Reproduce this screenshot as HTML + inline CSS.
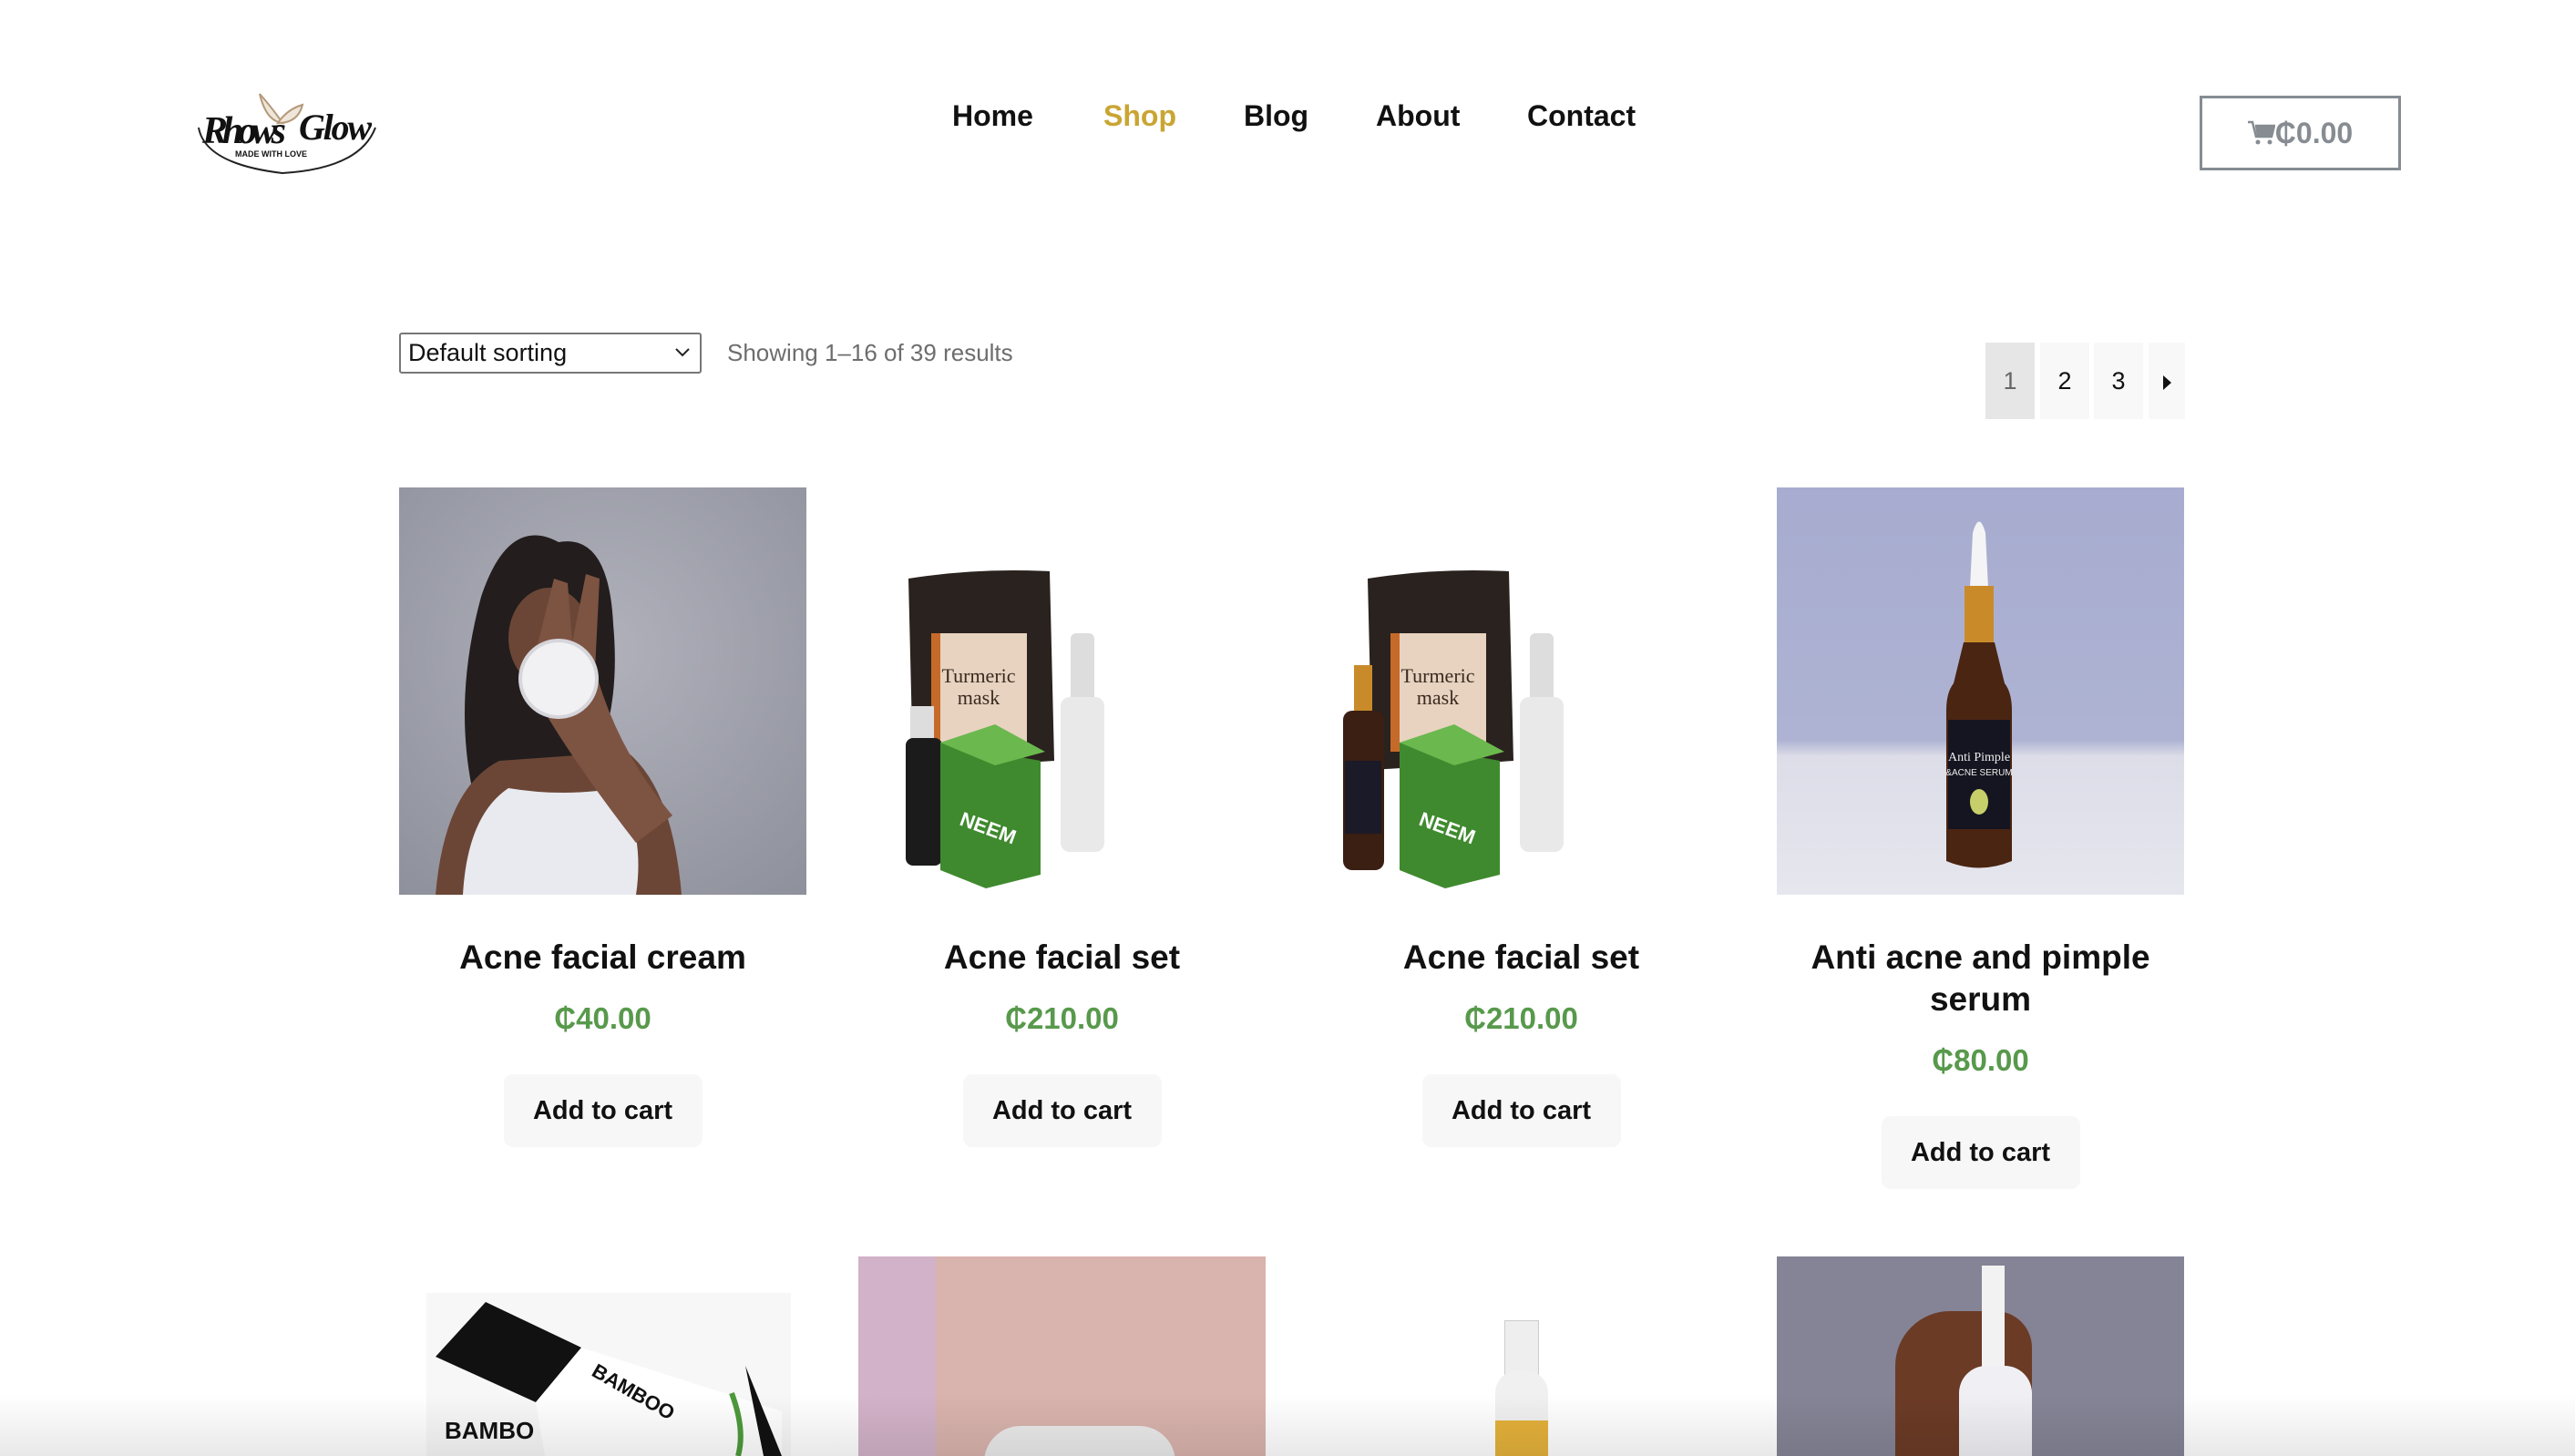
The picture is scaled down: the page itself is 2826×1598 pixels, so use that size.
<!DOCTYPE html>
<html><head><meta charset="utf-8"><style>
*{margin:0;padding:0;box-sizing:border-box}
body{width:2826px;height:1598px;background:#fff;position:relative;overflow:hidden;font-family:"Liberation Sans",sans-serif}
.a{position:absolute}
.nav{top:109px;font-size:32px;font-weight:bold;color:#111}
.card{position:absolute;width:447px;text-align:center}
.img{width:447px;height:447px;position:relative;overflow:hidden}
.t{font-size:37px;font-weight:bold;color:#111;margin-top:46px;line-height:46px}
.p{font-size:33px;color:#58994c;margin-top:24px;line-height:40px;font-weight:bold;-webkit-text-stroke:0}
.b{display:inline-block;margin-top:41px;width:218px;height:80px;line-height:80px;background:#f7f7f7;border-radius:10px;font-size:29px;font-weight:bold;color:#111}
.pg{position:absolute;top:376px;height:84px;line-height:84px;text-align:center;font-size:27px;background:#f8f8f8;color:#111}
</style></head><body>

<div class="a" style="left:210px;top:95px;width:205px;height:105px">
<svg width="205" height="105" viewBox="0 0 205 105">
<path d="M75 8 Q90 25 100 40 Q82 38 75 8Z" fill="#efe6da" stroke="#b49a7a" stroke-width="2"/>
<path d="M95 40 Q105 25 122 20 Q117 40 95 40Z" fill="#efe6da" stroke="#b49a7a" stroke-width="2"/>
<text x="12" y="62" font-family="Liberation Serif,serif" font-style="italic" font-size="42" font-weight="bold" fill="#111" textLength="92">Rhows</text>
<text x="118" y="58" font-family="Liberation Serif,serif" font-style="italic" font-size="40" font-weight="bold" fill="#111" textLength="80">Glow</text>
<text x="48" y="77" font-size="9" font-weight="bold" fill="#111">MADE WITH LOVE</text>
<path d="M8 45 Q15 85 100 95 Q185 90 202 45" fill="none" stroke="#222" stroke-width="2"/>
</svg></div>

<div class="a nav" style="left:1045px">Home</div>
<div class="a nav" style="left:1211px;color:#c9a533">Shop</div>
<div class="a nav" style="left:1365px">Blog</div>
<div class="a nav" style="left:1510px">About</div>
<div class="a nav" style="left:1676px">Contact</div>

<div class="a" style="left:2414px;top:105px;width:221px;height:82px;border:3px solid #868c92;color:#868c92;font-size:32px;font-weight:bold;text-align:center;line-height:76px">
<svg width="30" height="28" viewBox="0 0 30 28" style="vertical-align:-3px"><path d="M0 2h5l4 16h17l3-12H8" fill="none" stroke="#868c92" stroke-width="2.5"/><path d="M8 7h21l-3 11H10z" fill="#868c92"/><circle cx="11" cy="24" r="2.5" fill="#868c92"/><circle cx="24" cy="24" r="2.5" fill="#868c92"/></svg>₵0.00</div>

<div class="a" style="left:438px;top:365px;width:332px;height:45px;border:2px solid #777;border-radius:3px;font-size:27px;line-height:41px;padding-left:8px;color:#111">Default sorting
<svg class="a" style="right:10px;top:14px" width="18" height="12" viewBox="0 0 18 12"><path d="M2 2l7 7 7-7" fill="none" stroke="#222" stroke-width="2"/></svg></div>
<div class="a" style="left:798px;top:372px;font-size:26px;color:#6d6d6d">Showing 1–16 of 39 results</div>

<div class="pg" style="left:2179px;width:54px;background:#e6e6e6;color:#666">1</div>
<div class="pg" style="left:2239px;width:54px">2</div>
<div class="pg" style="left:2298px;width:54px">3</div>
<div class="pg" style="left:2358px;width:40px"><svg width="12" height="18" viewBox="0 0 12 18" style="vertical-align:-2px"><path d="M2 1l9 8-9 8z" fill="#111"/></svg></div>

<div class="card" style="left:438px;top:535px">
<div class="img" style="background:radial-gradient(circle at 50% 40%,#b0b1bb,#8e909b)">
<svg width="447" height="447" viewBox="0 0 447 447">
<path d="M90 120 Q120 30 175 60 Q230 50 235 150 Q245 260 200 330 L80 330 Q60 230 90 120Z" fill="#231d1d"/>
<ellipse cx="165" cy="165" rx="45" ry="55" fill="#6b4636"/>
<path d="M40 447 Q50 330 110 300 L250 290 Q300 330 310 447Z" fill="#6b4636"/>
<path d="M70 447 Q75 360 120 330 Q180 340 240 330 Q270 380 260 447Z" fill="#e8eaf0"/>
<path d="M150 180 L170 100 L185 105 L190 170 L205 95 L220 100 L215 200 Q240 290 300 360 L260 390 Q190 300 150 230Z" fill="#7d5342"/>
<circle cx="175" cy="210" r="42" fill="#f1f1f4" stroke="#d5d5da" stroke-width="4"/>
</svg></div>
<div class="t">Acne facial cream</div><div class="p">₵40.00</div><div class="b">Add to cart</div></div>

<div class="card" style="left:942px;top:535px">
<div class="img" style="background:#fff">
<svg width="447" height="447" viewBox="0 0 447 447">
<path d="M55 100 Q130 88 210 92 L215 300 L60 310Z" fill="#2a221e"/>
<rect x="80" y="160" width="105" height="130" fill="#e7d3bf"/><rect x="80" y="160" width="10" height="130" fill="#c66a2a"/>
<text x="132" y="214" text-anchor="middle" font-family="Liberation Serif,serif" font-size="22" fill="#3a2a20">Turmeric</text>
<text x="132" y="238" text-anchor="middle" font-family="Liberation Serif,serif" font-size="22" fill="#3a2a20">mask</text>
<rect x="233" y="160" width="26" height="80" rx="6" fill="#ddd"/><rect x="222" y="230" width="48" height="170" rx="10" fill="#e9e9ea"/>
<rect x="57" y="240" width="26" height="40" fill="#ddd"/><rect x="52" y="275" width="40" height="140" rx="8" fill="#1b1b1b"/>
<path d="M90 280 L200 300 L200 425 L140 440 L90 420Z" fill="#3f8a2e"/><path d="M90 280 L150 260 L205 290 L150 305Z" fill="#6bb84e"/>
<text x="110" y="370" font-size="22" font-weight="bold" fill="#fff" transform="rotate(20 110 370)">NEEM</text>
</svg></div>
<div class="t">Acne facial set</div><div class="p">₵210.00</div><div class="b">Add to cart</div></div>

<div class="card" style="left:1446px;top:535px">
<div class="img" style="background:#fff">
<svg width="447" height="447" viewBox="0 0 447 447">
<path d="M55 100 Q130 88 210 92 L215 300 L60 310Z" fill="#2a221e"/>
<rect x="80" y="160" width="105" height="130" fill="#e7d3bf"/><rect x="80" y="160" width="10" height="130" fill="#c66a2a"/>
<text x="132" y="214" text-anchor="middle" font-family="Liberation Serif,serif" font-size="22" fill="#3a2a20">Turmeric</text>
<text x="132" y="238" text-anchor="middle" font-family="Liberation Serif,serif" font-size="22" fill="#3a2a20">mask</text>
<rect x="233" y="160" width="26" height="80" rx="6" fill="#ddd"/><rect x="222" y="230" width="48" height="170" rx="10" fill="#e9e9ea"/>
<rect x="40" y="195" width="20" height="50" fill="#c98b2a"/><rect x="28" y="245" width="45" height="175" rx="10" fill="#3a1f12"/><rect x="30" y="300" width="40" height="80" fill="#1b1a28"/>
<path d="M90 280 L200 300 L200 425 L140 440 L90 420Z" fill="#3f8a2e"/><path d="M90 280 L150 260 L205 290 L150 305Z" fill="#6bb84e"/>
<text x="110" y="370" font-size="22" font-weight="bold" fill="#fff" transform="rotate(20 110 370)">NEEM</text>
</svg></div>
<div class="t">Acne facial set</div><div class="p">₵210.00</div><div class="b">Add to cart</div></div>

<div class="card" style="left:1950px;top:535px">
<div class="img" style="background:linear-gradient(#a7acd0 0%,#aeb3d3 62%,#dcdde8 66%,#e6e6ee 100%)">
<svg width="447" height="447" viewBox="0 0 447 447">
<path d="M215 50 Q222 25 229 50 L232 110 L212 110Z" fill="#f4f4f6"/>
<rect x="206" y="108" width="32" height="62" fill="#c98b2a"/>
<path d="M205 170 L239 170 L250 215 Q258 225 258 245 L258 410 Q222 425 186 410 L186 245 Q186 225 194 215Z" fill="#4a2512"/>
<rect x="188" y="255" width="68" height="120" fill="#141520"/>
<text x="222" y="300" text-anchor="middle" font-family="Liberation Serif,serif" font-size="14" fill="#eee">Anti Pimple</text>
<text x="222" y="316" text-anchor="middle" font-size="10" fill="#eee">&amp;ACNE SERUM</text>
<ellipse cx="222" cy="345" rx="10" ry="14" fill="#c7cf6a"/>
</svg></div>
<div class="t">Anti acne and pimple<br>serum</div><div class="p">₵80.00</div><div class="b">Add to cart</div></div>

<div class="a" style="left:438px;top:1379px;width:447px;height:219px;overflow:hidden">
<svg width="447" height="219" viewBox="0 0 447 219">
<rect x="30" y="40" width="400" height="179" fill="#f7f7f7"/>
<path d="M40 110 L95 50 L200 100 L150 160Z" fill="#111"/>
<path d="M150 160 L200 100 L420 170 L420 219 L160 219Z" fill="#fff"/>
<text x="210" y="130" font-size="22" font-weight="bold" fill="#111" transform="rotate(30 210 130)">BAMBOO</text>
<path d="M380 120 L420 219 L400 219Z" fill="#111"/><path d="M365 150 Q380 190 372 219" stroke="#4c9a3a" stroke-width="6" fill="none"/>
<text x="50" y="200" font-size="26" font-weight="bold" fill="#111">BAMBO</text>
</svg></div>
<div class="a" style="left:942px;top:1379px;width:447px;height:219px;background:#d9b3ad;overflow:hidden">
<div class="a" style="left:0;top:0;width:85px;height:219px;background:#d2b2c8"></div>
<div class="a" style="left:138px;top:186px;width:210px;height:60px;background:#eaeaea;border-radius:40px 40px 0 0"></div></div>
<div class="a" style="left:1446px;top:1379px;width:447px;height:219px;background:#fff;overflow:hidden">
<div class="a" style="left:205px;top:70px;width:38px;height:60px;background:#eee;border:1px solid #ccc"></div>
<div class="a" style="left:195px;top:125px;width:58px;height:100px;background:#f0f0f0;border-radius:25px 25px 0 0"></div>
<div class="a" style="left:195px;top:180px;width:58px;height:50px;background:#e4b13a"></div></div>
<div class="a" style="left:1950px;top:1379px;width:447px;height:219px;background:#858496;overflow:hidden">
<div class="a" style="left:130px;top:60px;width:150px;height:200px;background:#6b3b26;border-radius:60px 40px 0 0"></div>
<div class="a" style="left:225px;top:10px;width:25px;height:130px;background:#f2f2f2"></div>
<div class="a" style="left:200px;top:120px;width:80px;height:120px;background:#f0f0f4;border-radius:30px 30px 0 0"></div></div>

<div class="a" style="left:0;top:1530px;width:2826px;height:68px;background:linear-gradient(rgba(0,0,0,0),rgba(0,0,0,0.09))"></div>
</body></html>
